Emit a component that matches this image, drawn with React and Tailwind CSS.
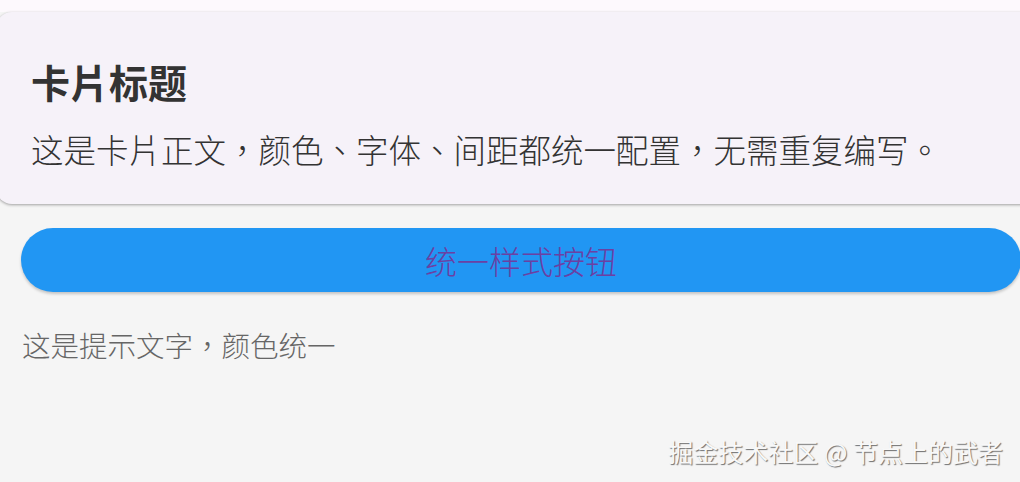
// App.jsx
export default function App() {
  const cjk = { fontFamily: '"Noto Sans CJK TC", "Noto Sans CJK SC", "Noto Sans", sans-serif' };

  return (
    <div
      lang="zh-TW"
      className="relative w-[1020px] h-[482px] overflow-hidden bg-[#f5f5f5]"
      style={cjk}
    >
      {/* top strip */}
      <div className="h-[12px] bg-[#fdf9fd]" />

      {/* card */}
      <div className="-ml-[4px] w-[1050px] rounded-2xl bg-[#f6f2f9] pl-[35px] pt-[45px] pb-[33px] shadow-[0_1px_3px_rgba(0,0,0,0.35)]">
        <h2 className="text-[39px] leading-[48px] font-bold text-[#333333]">
          卡片标题
        </h2>
        <p className="mt-[22px] text-[32.5px] leading-[44px] font-light text-[#333333]">
          这是卡片正文，颜色、字体、间距都统一配置，无需重复编写。
        </p>
      </div>

      {/* button */}
      <button className="ml-[21px] mt-[24px] flex h-[64px] w-[1000px] items-center justify-center rounded-full bg-[#2196f3] text-[32px] font-light text-[#6b40a3] shadow-[0_2px_3px_rgba(0,0,0,0.2)]">
        统一样式按钮
      </button>

      {/* hint */}
      <p className="ml-[22px] mt-[35px] text-[28.5px] leading-[36px] font-light text-[#666666]">
        这是提示文字，颜色统一
      </p>

      {/* watermark */}
      <div className="absolute right-[17px] bottom-[14px] text-[25px] leading-[34px] text-[#f8f8f8] [text-shadow:1px_1px_1px_rgba(0,0,0,0.55)]">
        掘金技术社区 @ 节点上的武者
      </div>
    </div>
  );
}
